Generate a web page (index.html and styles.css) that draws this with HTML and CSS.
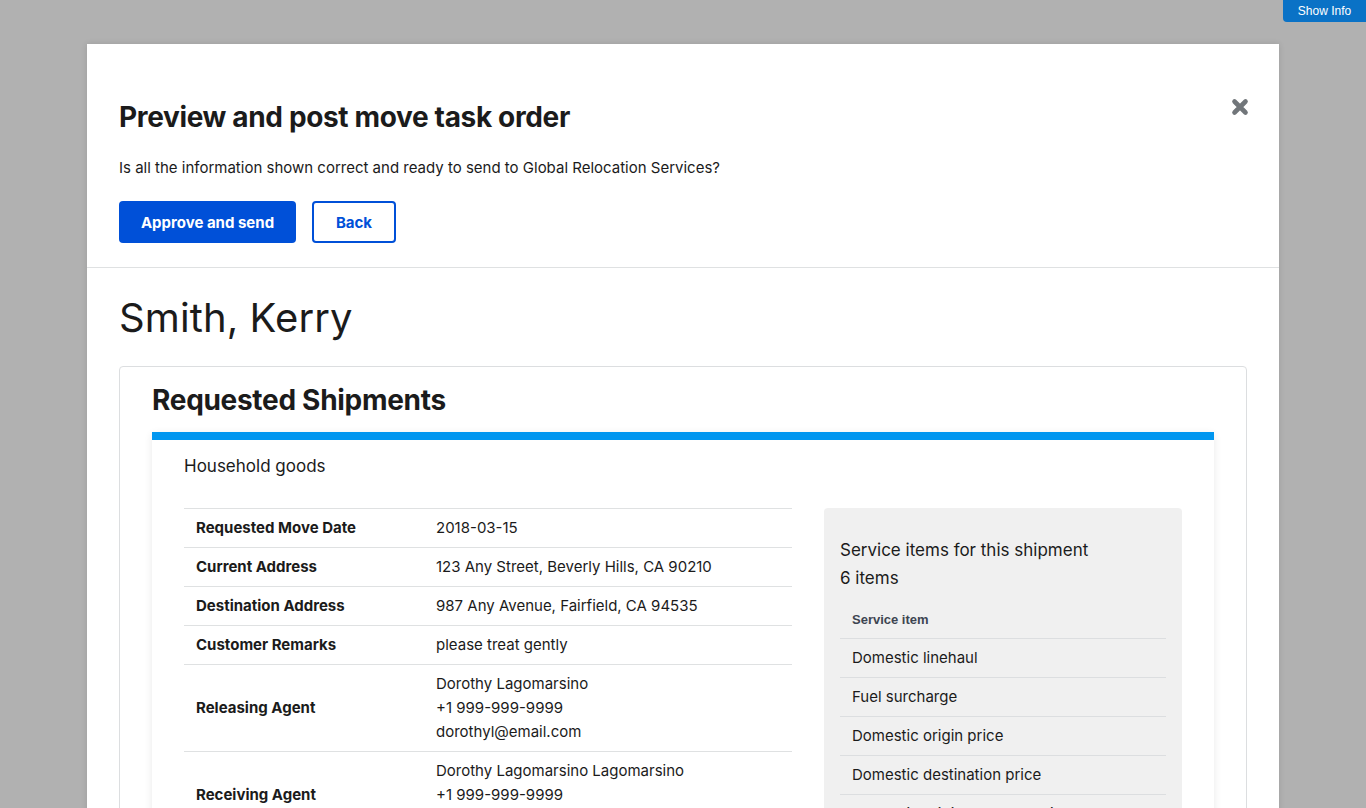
FILE: index.html
```html
<!DOCTYPE html>
<html lang="en">
<head>
<meta charset="utf-8">
<title>Preview and post move task order</title>
<link rel="stylesheet" href="styles.css">
</head>
<body>
<button class="show-info" type="button">Show Info</button>
<div class="modal">
  <div class="modal-header">
    <button class="close-btn" type="button" aria-label="Close">
      <svg width="18" height="18" viewBox="0 0 18 18"><path d="M3.5 3.5 L14.5 14.5 M14.5 3.5 L3.5 14.5" stroke="#71767a" stroke-width="4.6" stroke-linecap="round" fill="none"/></svg>
    </button>
    <h2 class="modal-title">Preview and post move task order</h2>
    <p class="modal-text">Is all the information shown correct and ready to send to Global Relocation Services?</p>
    <div class="button-row">
      <button class="btn btn-primary" type="button">Approve and send</button>
      <button class="btn btn-outline" type="button">Back</button>
    </div>
  </div>
  <div class="modal-body">
    <h1 class="customer-name">Smith, Kerry</h1>
    <section class="card">
      <h2 class="card-title">Requested Shipments</h2>
      <div class="shipment">
        <h3 class="shipment-type">Household goods</h3>
        <div class="shipment-grid">
          <table class="details">
            <tbody>
              <tr><th>Requested Move Date</th><td>2018-03-15</td></tr>
              <tr><th>Current Address</th><td>123 Any Street, Beverly Hills, CA 90210</td></tr>
              <tr><th>Destination Address</th><td>987 Any Avenue, Fairfield, CA 94535</td></tr>
              <tr><th>Customer Remarks</th><td>please treat gently</td></tr>
              <tr><th>Releasing Agent</th><td>Dorothy Lagomarsino<br>+1 999-999-9999<br>dorothyl@email.com</td></tr>
              <tr><th>Receiving Agent</th><td>Dorothy Lagomarsino Lagomarsino<br>+1 999-999-9999<br>dorothyl@email.com</td></tr>
            </tbody>
          </table>
          <div class="service-panel">
            <p class="service-title">Service items for this shipment</p>
            <p class="service-count">6 items</p>
            <table class="service-table">
              <thead><tr><th>Service item</th></tr></thead>
              <tbody>
                <tr><td>Domestic linehaul</td></tr>
                <tr><td>Fuel surcharge</td></tr>
                <tr><td>Domestic origin price</td></tr>
                <tr><td>Domestic destination price</td></tr>
                <tr><td>Domestic origin shuttle service</td></tr>
                <tr><td>Domestic destination shuttle service</td></tr>
              </tbody>
            </table>
          </div>
        </div>
      </div>
    </section>
  </div>
</div>
</body>
</html>
```

FILE: styles.css
```css
* { box-sizing: border-box; }

html, body {
  margin: 0;
  height: 808px;
  overflow: hidden;
}

body {
  background: #b1b1b1;
  font-family: "Inter", "Liberation Sans", sans-serif;
  color: #1b1b1b;
}

.show-info {
  position: absolute;
  top: 0;
  right: 0;
  width: 83px;
  height: 22px;
  border: 0;
  padding: 0;
  background: #0a72c6;
  color: #fff;
  font-family: "Liberation Sans", Arial, sans-serif;
  font-size: 12px;
  border-bottom-left-radius: 4px;
}

.modal {
  position: relative;
  width: 1192px;
  margin: 44px 0 0 87px;
  background: #fff;
  box-shadow: 0 0 6px rgba(0, 0, 0, 0.12);
}

.modal-header {
  padding: 56px 32px 24px;
  border-bottom: 1px solid #dfe1e2;
}

.close-btn {
  position: absolute;
  top: 54px;
  right: 30px;
  border: 0;
  padding: 0;
  background: none;
  width: 18px;
  height: 18px;
  display: block;
}

.close-btn svg { display: block; }

.modal-title {
  margin: 0;
  font-size: 28px;
  line-height: 34px;
  font-weight: 700;
  letter-spacing: -0.35px;
}

.modal-text {
  margin: 22px 0 0;
  font-size: 15px;
  line-height: 24px;
}

.button-row {
  display: flex;
  gap: 16px;
  margin-top: 21px;
}

.btn {
  height: 42px;
  border-radius: 4px;
  font-family: inherit;
  font-size: 15px;
  font-weight: 700;
  padding: 0;
  white-space: nowrap;
}

.btn-primary {
  background: #0050d8;
  color: #fff;
  border: 0;
  width: 177px;
}

.btn-outline {
  background: #fff;
  color: #0050d8;
  border: 2px solid #0050d8;
  width: 84px;
}

.modal-body {
  padding: 26px 32px 0;
}

.customer-name {
  margin: 0;
  font-size: 40px;
  line-height: 48px;
  font-weight: 400;
  letter-spacing: 0.1px;
}

.card {
  margin-top: 24px;
  border: 1px solid #dcdee0;
  border-radius: 4px;
  padding: 16px 32px 40px;
}

.card-title {
  margin: 0;
  font-size: 28px;
  line-height: 34px;
  font-weight: 700;
  letter-spacing: -0.3px;
}

.shipment {
  margin-top: 15px;
  border-top: 8px solid #0096f0;
  box-shadow: 0 2px 8px rgba(0, 0, 0, 0.09);
  padding: 14px 32px 32px;
}

.shipment-type {
  margin: 0;
  font-size: 17px;
  line-height: 24px;
  font-weight: 400;
}

.shipment-grid {
  display: grid;
  grid-template-columns: 608px 358px;
  gap: 32px;
  margin-top: 30px;
  align-items: start;
}

.details {
  width: 100%;
  border-collapse: collapse;
  font-size: 15px;
  line-height: 24px;
}

.details th,
.details td {
  border-top: 1px solid #dfe1e2;
  padding: 7px 12px;
  text-align: left;
  vertical-align: middle;
}

.details th {
  width: 240px;
  font-weight: 700;
}

.details td { font-weight: 400; }

.service-panel {
  background: #f0f0f0;
  border-radius: 4px;
  padding: 28px 16px 16px;
}

.service-title,
.service-count {
  margin: 0;
  font-size: 17px;
  line-height: 28px;
}

.service-table {
  width: 100%;
  margin-top: 10px;
  border-collapse: collapse;
}

.service-table th {
  text-align: left;
  font-family: "Liberation Sans", Arial, sans-serif;
  font-size: 13px;
  font-weight: 700;
  color: #3d4551;
  padding: 8px 12px;
  line-height: 20px;
  border-bottom: 1px solid #dcdee0;
}

.service-table td {
  font-size: 15px;
  line-height: 24px;
  padding: 7px 12px;
  border-bottom: 1px solid #dcdee0;
}
```
